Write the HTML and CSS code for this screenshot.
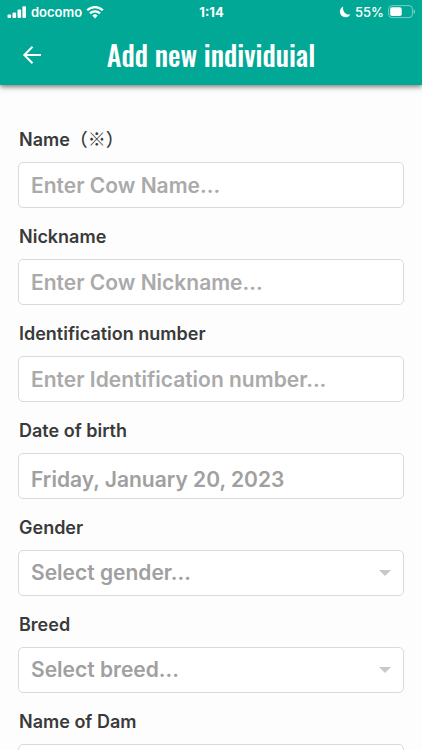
FILE: index.html
```html
<!DOCTYPE html>
<html lang="en">
<head>
<meta charset="utf-8">
<meta name="viewport" content="width=device-width, initial-scale=1">
<title>Add new individuial</title>
<link rel="stylesheet" href="styles.css">
</head>
<body>
<header class="app-header">
  <div class="status-bar">
    <div class="carrier">
      <svg width="20" height="14" viewBox="0 0 20 14" fill="currentColor" aria-hidden="true"><rect x=".5" y="9.5" width="3.6" height="3.5" rx="1"/><rect x="5.5" y="7.5" width="3.6" height="5.5" rx="1"/><rect x="10.5" y="4.5" width="3.6" height="8.5" rx="1"/><rect x="15.4" y="1.2" width="3.6" height="11.8" rx="1"/></svg>
      <span>docomo</span>
      <svg width="18" height="14" viewBox="0 0 18 14" fill="none" stroke="currentColor" stroke-width="2.3" aria-hidden="true"><path d="M1.2 5.3a11 11 0 0 1 15.6 0M4 8.4a7 7 0 0 1 10 0"/><path d="M6.3 10.6a4 4 0 0 1 5.4 0L9 13.4z" fill="currentColor" stroke="none"/></svg>
    </div>
    <time>1:14</time>
    <div class="power">
      <svg width="12" height="12" viewBox="0 0 12 12" fill="currentColor" aria-hidden="true"><path d="M4.2.6A5.6 5.6 0 1 0 11.4 8.4C7 9.4 3.2 5.6 4.2.6z"/></svg>
      <span>55%</span>
      <svg width="28" height="14" viewBox="0 0 28 14" aria-hidden="true"><rect x=".6" y=".6" width="23.8" height="12" rx="3.4" fill="none" stroke="#fff" stroke-opacity=".45"/><rect x="2.2" y="2.2" width="11.5" height="8.8" rx="1.8" fill="#fff"/><path d="M25.6 4.3c2 .8 2 3.8 0 4.6z" fill="#fff" fill-opacity=".5"/></svg>
    </div>
  </div>
  <div class="title-bar">
    <button class="back" type="button" aria-label="Back"><svg width="20" height="20" viewBox="0 0 20 20" fill="none" stroke="currentColor" stroke-width="2" aria-hidden="true"><path d="M19 10H2.5M10.5 1.8L2.3 10l8.2 8.2"/></svg></button>
    <h1>Add new individuial</h1>
  </div>
</header>
<main class="content">
  <form class="form">
    <div class="field"><label for="name">Name<span class="mark" lang="ja">（※）</span></label><input id="name" type="text" placeholder="Enter Cow Name..."></div>
    <div class="field"><label for="nickname">Nickname</label><input id="nickname" type="text" placeholder="Enter Cow Nickname..."></div>
    <div class="field"><label for="number">Identification number</label><input id="number" type="text" placeholder="Enter Identification number..."></div>
    <div class="field"><label for="birth">Date of birth</label><input id="birth" class="date" type="text" value="Friday, January 20, 2023"></div>
    <div class="field"><label for="gender">Gender</label><select id="gender"><option>Select gender...</option></select></div>
    <div class="field"><label for="breed">Breed</label><select id="breed"><option>Select breed...</option></select></div>
    <div class="field"><label for="dam">Name of Dam</label><input id="dam" type="text"></div>
  </form>
</main>
</body>
</html>
```
FILE: styles.css
```css
* { box-sizing: border-box; }

body {
  margin: 0;
  height: 100vh;
  display: flex;
  flex-direction: column;
  background: #fdfdfd;
  color: #3a3a3a;
  font-family: Inter, "Noto Sans CJK JP", sans-serif;
  font-weight: 600;
}

.app-header {
  flex: none;
  position: relative;
  z-index: 1;
  background: #02a896;
  color: #fff;
  box-shadow: 0 2px 5px rgba(0, 0, 0, .5);
}

.status-bar {
  display: grid;
  grid-template-columns: 1fr auto 1fr;
  align-items: center;
  height: 24px;
  padding: 0 6px 0 7px;
  font-size: 13px;
  line-height: 24px;
}

.status-bar time { font-weight: 700; }

.carrier, .power { display: flex; align-items: center; gap: 4px; }
.power { justify-content: flex-end; gap: 4px; }
.power span { font-weight: 500; }

.title-bar {
  display: grid;
  grid-template-columns: 48px 1fr 48px;
  align-items: center;
  height: 61px;
  padding: 0 8px;
}

.back {
  display: grid;
  place-items: center;
  height: 48px;
  padding: 0;
  border: 0;
  background: none;
  color: inherit;
}

h1 {
  margin: 0;
  text-align: center;
  font-family: Oswald, "Liberation Sans Narrow", "Liberation Sans", sans-serif;
  font-size: 28px;
  line-height: 40px;
  font-weight: 500;
  white-space: nowrap;
}

.content {
  flex: 1;
  min-height: 0;
  overflow-y: auto;
  scrollbar-width: none;
}

.form {
  display: flex;
  flex-direction: column;
  gap: 17px;
  padding: 43px 18px 24px;
}

.field { display: flex; flex-direction: column; gap: 10px; }

label { font-size: 18px; line-height: 24px; height: 24px; padding-left: 1px; }

.mark { font-family: "Noto Sans CJK JP", sans-serif; font-weight: 500; line-height: 1; }

input, select {
  width: 100%;
  height: 46px;
  margin: 0;
  padding: 0 12px;
  border: 1px solid #dadada;
  border-radius: 5px;
  background: #fff;
  color: #a0a0a0;
  font: inherit;
  font-size: 21px;
}

input::placeholder { color: #aaa; opacity: 1; }

.date { padding-top: 6px; }

select {
  padding-bottom: 2px;
  appearance: none;
  background: #fff url("data:image/svg+xml,%3Csvg xmlns='http://www.w3.org/2000/svg' width='12' height='6'%3E%3Cpath d='M0 0h12L6 6z' fill='%23c8c8c8'/%3E%3C/svg%3E") no-repeat right 12px center;
}
```
